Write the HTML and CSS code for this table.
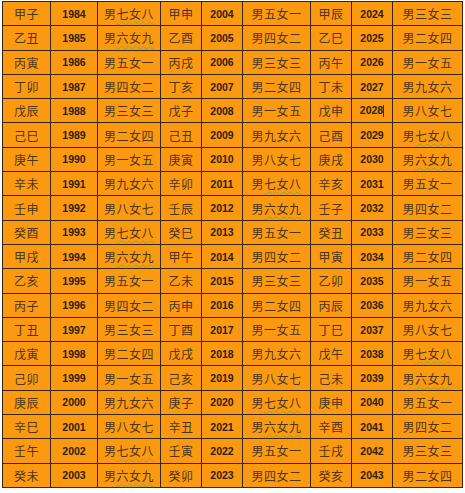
FILE: index.html
```html
<!DOCTYPE html>
<html lang="zh">
<head>
<meta charset="utf-8">
<title>生肖年表</title>
<link rel="stylesheet" href="styles.css">
</head>
<body>
<table class="grid">
<colgroup>
<col class="c-gz"><col class="c-yr"><col class="c-mf1">
<col class="c-gz2"><col class="c-yr2"><col class="c-mf2">
<col class="c-gz3"><col class="c-yr3"><col class="c-mf3">
</colgroup>
<tbody>
<tr><td class="gz">甲子</td><td class="yr">1984</td><td class="mf">男<span class="sp">七女八</span></td><td class="gz">甲申</td><td class="yr">2004</td><td class="mf">男五女一</td><td class="gz">甲辰</td><td class="yr">2024</td><td class="mf">男三女三</td></tr>
<tr><td class="gz">乙丑</td><td class="yr">1985</td><td class="mf">男<span class="sp">六女九</span></td><td class="gz">乙酉</td><td class="yr">2005</td><td class="mf">男四女二</td><td class="gz">乙巳</td><td class="yr">2025</td><td class="mf">男二女四</td></tr>
<tr><td class="gz">丙寅</td><td class="yr">1986</td><td class="mf">男五女一</td><td class="gz">丙戌</td><td class="yr">2006</td><td class="mf">男三女三</td><td class="gz">丙午</td><td class="yr">2026</td><td class="mf">男一女五</td></tr>
<tr><td class="gz">丁卯</td><td class="yr">1987</td><td class="mf">男四女二</td><td class="gz">丁亥</td><td class="yr">2007</td><td class="mf">男二女四</td><td class="gz">丁未</td><td class="yr">2027</td><td class="mf">男九女六</td></tr>
<tr><td class="gz">戊辰</td><td class="yr">1988</td><td class="mf">男三女三</td><td class="gz">戊子</td><td class="yr">2008</td><td class="mf">男一女五</td><td class="gz">戊申</td><td class="yr">2028<span class="caret"></span></td><td class="mf">男八女七</td></tr>
<tr><td class="gz">己巳</td><td class="yr">1989</td><td class="mf">男二女四</td><td class="gz">己丑</td><td class="yr">2009</td><td class="mf">男九女六</td><td class="gz">己酉</td><td class="yr">2029</td><td class="mf">男<span class="sp">七女八</span></td></tr>
<tr><td class="gz">庚午</td><td class="yr">1990</td><td class="mf">男一女五</td><td class="gz">庚寅</td><td class="yr">2010</td><td class="mf">男八女七</td><td class="gz">庚戌</td><td class="yr">2030</td><td class="mf">男<span class="sp">六女九</span></td></tr>
<tr><td class="gz">辛未</td><td class="yr">1991</td><td class="mf">男九女六</td><td class="gz">辛卯</td><td class="yr">2011</td><td class="mf">男<span class="sp">七女八</span></td><td class="gz">辛亥</td><td class="yr">2031</td><td class="mf">男五女一</td></tr>
<tr><td class="gz">壬申</td><td class="yr">1992</td><td class="mf">男八女七</td><td class="gz">壬辰</td><td class="yr">2012</td><td class="mf">男<span class="sp">六女九</span></td><td class="gz">壬子</td><td class="yr">2032</td><td class="mf">男四女二</td></tr>
<tr><td class="gz">癸酉</td><td class="yr">1993</td><td class="mf">男<span class="sp">七女八</span></td><td class="gz">癸巳</td><td class="yr">2013</td><td class="mf">男五女一</td><td class="gz">癸丑</td><td class="yr">2033</td><td class="mf">男三女三</td></tr>
<tr><td class="gz">甲戌</td><td class="yr">1994</td><td class="mf">男<span class="sp">六女九</span></td><td class="gz">甲午</td><td class="yr">2014</td><td class="mf">男四女二</td><td class="gz">甲寅</td><td class="yr">2034</td><td class="mf">男二女四</td></tr>
<tr><td class="gz">乙亥</td><td class="yr">1995</td><td class="mf">男五女一</td><td class="gz">乙未</td><td class="yr">2015</td><td class="mf">男三女三</td><td class="gz">乙卯</td><td class="yr">2035</td><td class="mf">男一女五</td></tr>
<tr><td class="gz">丙子</td><td class="yr">1996</td><td class="mf">男四女二</td><td class="gz">丙申</td><td class="yr">2016</td><td class="mf">男二女四</td><td class="gz">丙辰</td><td class="yr">2036</td><td class="mf">男九女六</td></tr>
<tr><td class="gz">丁丑</td><td class="yr">1997</td><td class="mf">男三女三</td><td class="gz">丁酉</td><td class="yr">2017</td><td class="mf">男一女五</td><td class="gz">丁巳</td><td class="yr">2037</td><td class="mf">男八女七</td></tr>
<tr><td class="gz">戊寅</td><td class="yr">1998</td><td class="mf">男二女四</td><td class="gz">戊戌</td><td class="yr">2018</td><td class="mf">男九女六</td><td class="gz">戊午</td><td class="yr">2038</td><td class="mf">男<span class="sp">七女八</span></td></tr>
<tr><td class="gz">己卯</td><td class="yr">1999</td><td class="mf">男一女五</td><td class="gz">己亥</td><td class="yr">2019</td><td class="mf">男八女七</td><td class="gz">己未</td><td class="yr">2039</td><td class="mf">男<span class="sp">六女九</span></td></tr>
<tr><td class="gz">庚辰</td><td class="yr">2000</td><td class="mf">男九女六</td><td class="gz">庚子</td><td class="yr">2020</td><td class="mf">男<span class="sp">七女八</span></td><td class="gz">庚申</td><td class="yr">2040</td><td class="mf">男五女一</td></tr>
<tr><td class="gz">辛巳</td><td class="yr">2001</td><td class="mf">男八女七</td><td class="gz">辛丑</td><td class="yr">2021</td><td class="mf">男<span class="sp">六女九</span></td><td class="gz">辛酉</td><td class="yr">2041</td><td class="mf">男四女二</td></tr>
<tr><td class="gz">壬午</td><td class="yr">2002</td><td class="mf">男<span class="sp">七女八</span></td><td class="gz">壬寅</td><td class="yr">2022</td><td class="mf">男五女一</td><td class="gz">壬戌</td><td class="yr">2042</td><td class="mf">男三女三</td></tr>
<tr><td class="gz">癸未</td><td class="yr">2003</td><td class="mf">男<span class="sp">六女九</span></td><td class="gz">癸卯</td><td class="yr">2023</td><td class="mf">男四女二</td><td class="gz">癸亥</td><td class="yr">2043</td><td class="mf">男二女四</td></tr>
</tbody>
</table>
</body>
</html>
```

FILE: styles.css
```css
html, body {
  margin: 0;
  padding: 0;
  background: #ffffff;
}

body {
  padding: 1px 0 0 2px;
}

.grid {
  border-collapse: collapse;
  table-layout: fixed;
  width: 461px;
  height: 487px;
  background: #fb9a10;
}

.c-gz { width: 48px; }
.c-yr { width: 47px; }
.c-mf1 { width: 63px; }
.c-gz2 { width: 41px; }
.c-yr2 { width: 41px; }
.c-mf2 { width: 68px; }
.c-gz3 { width: 41px; }
.c-yr3 { width: 41px; }
.c-mf3 { width: 70px; }

.grid td {
  border: 1px solid #3a2610;
  padding: 0;
  text-align: center;
  vertical-align: middle;
  white-space: nowrap;
}

.gz, .mf {
  font-family: "Noto Sans CJK SC", "Noto Sans", sans-serif;
  font-size: 12px;
  color: #4d3519;
  letter-spacing: 0.5px;
}

.yr {
  font-family: "Liberation Sans", Arial, sans-serif;
  font-size: 10.5px;
  font-weight: bold;
  color: #2e2010;
}

.sp {
  text-decoration: underline wavy #8aa83c;
  text-decoration-thickness: 1px;
  text-underline-offset: 2px;
}

.caret {
  display: inline-block;
  width: 0;
  height: 12px;
  border-left: 1px solid #1a2a6a;
  vertical-align: middle;
}
```
